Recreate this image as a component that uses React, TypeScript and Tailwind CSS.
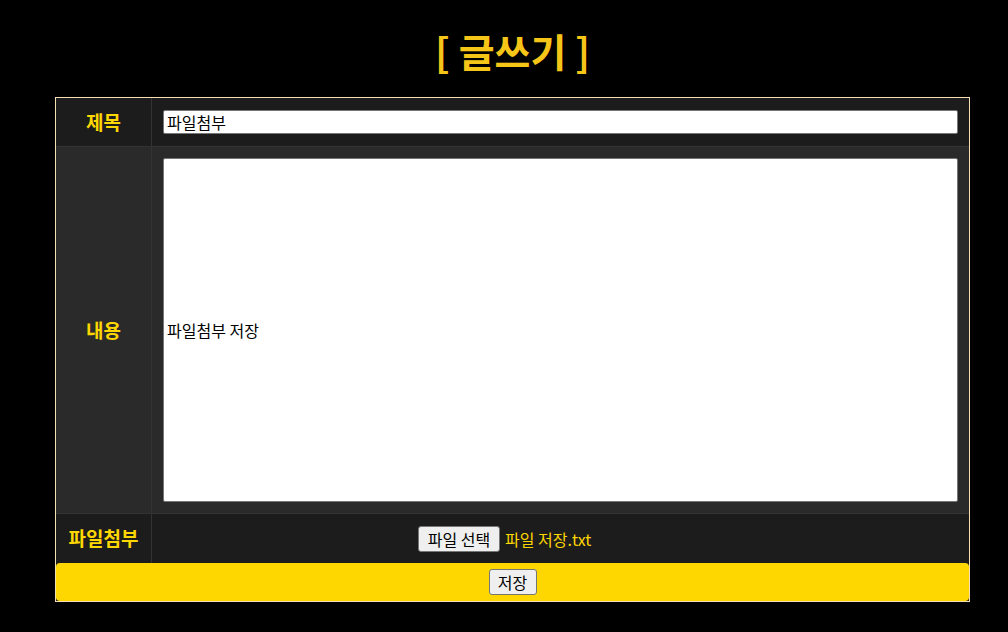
export default function App() {
  const font = { fontFamily: '"Noto Sans CJK KR", "Noto Sans", sans-serif' };

  return (
    <div className="w-full min-h-[632px] bg-black" style={font}>
      <div className="ml-[55px] w-[915px]">
        <h1 className="text-center text-[39px] font-bold leading-[50px] pt-[25px] pb-[22px] text-[#f5c518]">
          [ 글쓰기 ]
        </h1>
        <div className="border border-[#f5deb3] bg-[#1c1c1c]">
          {/* 제목 */}
          <div className="flex h-[49px] border-b border-[#333]">
            <div className="w-[96px] shrink-0 flex items-center justify-center border-r border-[#333] text-[19px] font-bold text-[#ffd700]">
              제목
            </div>
            <div className="flex-1 flex items-center px-[11px]">
              <div className="w-full h-[24px] bg-white border border-[#767676] rounded-[2px] flex items-center px-[3px] text-[16px] text-black">
                파일첨부
              </div>
            </div>
          </div>
          {/* 내용 */}
          <div className="flex h-[367px] border-b border-[#333] bg-[#2a2a2a]">
            <div className="w-[96px] shrink-0 flex items-center justify-center border-r border-[#333] text-[19px] font-bold text-[#ffd700]">
              내용
            </div>
            <div className="flex-1 flex items-center px-[11px] py-[11px]">
              <div className="w-full h-full bg-white border border-[#767676] rounded-[2px] flex items-center px-[3px] text-[16px] text-black">
                파일첨부 저장
              </div>
            </div>
          </div>
          {/* 파일첨부 */}
          <div className="flex h-[49px]">
            <div className="w-[96px] shrink-0 flex items-center justify-center border-r border-[#333] text-[19px] font-bold text-[#ffd700]">
              파일첨부
            </div>
            <div className="flex-1 flex items-center pl-[266px] gap-[5px]">
              <button className="h-[26px] w-[82px] bg-[#efefef] border border-[#767676] rounded-[3px] text-[16px] text-black leading-none">
                파일 선택
              </button>
              <span className="text-[16px] text-[#ffd700]">파일 저장.txt</span>
            </div>
          </div>
          {/* 저장 */}
          <div className="flex h-[38px] items-center justify-center bg-[#ffd700] rounded-[4px]">
            <button className="h-[26px] w-[48px] bg-[#efefef] border border-[#767676] rounded-[3px] text-[16px] text-black leading-none">
              저장
            </button>
          </div>
        </div>
      </div>
    </div>
  );
}
